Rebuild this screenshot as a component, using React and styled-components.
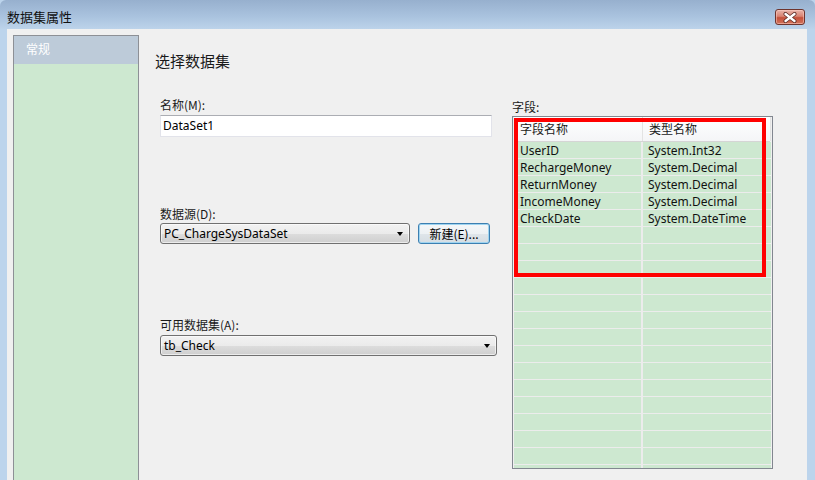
import React from "react";
import styled, { createGlobalStyle } from "styled-components";

const GlobalStyle = createGlobalStyle`
  html, body {
    margin: 0;
    padding: 0;
    background: #bcd4ec;
  }
  body {
    font-family: "Noto Sans", "Noto Sans CJK SC", sans-serif;
    font-size: 12px;
    color: #1e1e1e;
  }
`;

const fields = [
  ["UserID", "System.Int32"],
  ["RechargeMoney", "System.Decimal"],
  ["ReturnMoney", "System.Decimal"],
  ["IncomeMoney", "System.Decimal"],
  ["CheckDate", "System.DateTime"],
];

function App() {
  const rows = [...fields];
  while (rows.length < 20) rows.push(["", ""]);

  return (
    <>
      <GlobalStyle />
      <Window>
        <TitleBar>
          <Title>数据集属性</Title>
          <CloseButton>
            <svg width="14" height="11" viewBox="0 0 14 11">
              <path
                d="M2.5 2 L11.5 9 M11.5 2 L2.5 9"
                stroke="#5a2a24"
                strokeWidth="4"
                strokeLinecap="round"
              />
              <path
                d="M2.5 2 L11.5 9 M11.5 2 L2.5 9"
                stroke="#ffffff"
                strokeWidth="2.4"
                strokeLinecap="round"
              />
            </svg>
          </CloseButton>
        </TitleBar>
        <Body>
          <SidePanel>
            <SideItem>常规</SideItem>
          </SidePanel>
          <Main>
            <Heading>选择数据集</Heading>
            <Columns>
              <FormColumn>
                <Label>名称(M):</Label>
                <TextInput>DataSet1</TextInput>

                <Label $top={69}>数据源(D):</Label>
                <Row>
                  <Select $width={250}>
                    <span>PC_ChargeSysDataSet</span>
                    <Arrow />
                  </Select>
                  <Button>新建(E)...</Button>
                </Row>

                <Label $top={73}>可用数据集(A):</Label>
                <Select $width={337}>
                  <span>tb_Check</span>
                  <Arrow />
                </Select>
              </FormColumn>

              <GridColumn>
                <Label>字段:</Label>
                <GridBox>
                  <GridHeader>
                    <HeaderCell>字段名称</HeaderCell>
                    <HeaderCell>类型名称</HeaderCell>
                  </GridHeader>
                  {rows.map((r, i) => (
                    <GridRow key={i}>
                      <Cell>{r[0]}</Cell>
                      <Cell>{r[1]}</Cell>
                    </GridRow>
                  ))}
                  <Highlight />
                </GridBox>
              </GridColumn>
            </Columns>
          </Main>
        </Body>
      </Window>
    </>
  );
}

const Window = styled.div`
  width: 815px;
  height: 480px;
  display: flex;
  flex-direction: column;
  overflow: hidden;
  background: #bcd4ec;
  border-top-right-radius: 6px;
  border-top-left-radius: 6px;
`;

const TitleBar = styled.div`
  height: 29px;
  flex-shrink: 0;
  display: flex;
  align-items: center;
  justify-content: space-between;
  padding: 0 10px 0 7px;
  background: linear-gradient(to bottom, #97b0ce, #a9c2de 55%, #bcd3ea);
`;

const Title = styled.div`
  font-family: "Noto Sans CJK SC", sans-serif;
  font-size: 13px;
  color: #111;
  margin-top: 3px;
`;

const CloseButton = styled.div`
  width: 30px;
  height: 16px;
  margin-top: 5px;
  box-sizing: border-box;
  border: 1px solid #6e342d;
  border-radius: 3px;
  display: flex;
  align-items: center;
  justify-content: center;
  background: linear-gradient(to bottom, #e9b4aa, #d98372 45%, #c4503a 55%, #d2745c);
  box-shadow: inset 0 0 0 1px rgba(255, 210, 200, 0.5);
`;

const Body = styled.div`
  flex: 1;
  display: flex;
  margin: 0 8px 0 7px;
  padding: 6px 0 0 6px;
  background: #f0f0f0;
  min-height: 0;
`;

const SidePanel = styled.div`
  width: 126px;
  flex-shrink: 0;
  box-sizing: border-box;
  border: 1px solid #8d9096;
  border-bottom: none;
  background: #cde8d0;
`;

const SideItem = styled.div`
  height: 28px;
  line-height: 26px;
  padding-left: 12px;
  background: #bdcbd9;
  color: #ffffff;
  font-family: "Noto Sans CJK SC", sans-serif;
  font-size: 12px;
`;

const Main = styled.div`
  flex: 1;
  padding-left: 16px;
  display: flex;
  flex-direction: column;
  margin-top: -6px;
`;

const Heading = styled.div`
  margin-top: 22px;
  height: 20px;
  line-height: 20px;
  font-family: "Noto Sans CJK SC", sans-serif;
  font-size: 15px;
  color: #1a1a1a;
`;

const Columns = styled.div`
  display: flex;
  gap: 15px;
  margin-top: 26px;
  margin-left: 5px;
`;

const FormColumn = styled.div`
  width: 337px;
  display: flex;
  flex-direction: column;
`;

const Label = styled.div`
  height: 16px;
  line-height: 16px;
  margin-top: ${(p) => p.$top || 0}px;
  margin-bottom: 2px;
  font-family: "Noto Sans CJK SC", sans-serif;
  font-size: 12px;
  color: #1a1a1a;
`;

const TextInput = styled.div`
  width: 332px;
  height: 22px;
  box-sizing: border-box;
  border: 1px solid #e2e3ea;
  border-top-color: #abadb3;
  background: #fff;
  padding-left: 2px;
  line-height: 19px;
  color: #000;
`;

const Row = styled.div`
  display: flex;
  align-items: flex-start;
  gap: 8px;
  margin-top: -1px;
`;

const Select = styled.div`
  width: ${(p) => p.$width}px;
  height: 21px;
  box-sizing: border-box;
  border: 1px solid #707070;
  border-radius: 3px;
  background: linear-gradient(to bottom, #f2f2f2 0%, #ebebeb 50%, #dddddd 51%, #cfcfcf 100%);
  display: flex;
  align-items: center;
  justify-content: space-between;
  padding: 0 6px 0 3px;
  color: #000;
  box-shadow: inset 0 0 0 1px rgba(255, 255, 255, 0.6);
`;

const Arrow = styled.span`
  width: 0;
  height: 0;
  border-left: 3.5px solid transparent;
  border-right: 3.5px solid transparent;
  border-top: 4px solid #000;
  margin-top: 1px;
`;

const Button = styled.div`
  width: 72px;
  height: 21px;
  box-sizing: border-box;
  border: 1px solid #3c7fb1;
  border-radius: 3px;
  background: linear-gradient(to bottom, #f4f7f9 0%, #edf1f4 50%, #dfe5ea 51%, #d5dde3 100%);
  box-shadow: inset 0 0 0 1px #9fd4f0;
  text-align: center;
  line-height: 19px;
  font-family: "Noto Sans CJK SC", sans-serif;
  color: #000;
`;

const GridColumn = styled.div`
  width: 261px;
  display: flex;
  flex-direction: column;
  padding-top: 2px;
`;

const GridBox = styled.div`
  position: relative;
  height: 353px;
  box-sizing: border-box;
  border: 1px solid #828790;
  background: #f0f0f0;
  padding: 0 2px 0 1px;
  overflow: hidden;
  margin-top: -1px;
`;

const GridHeader = styled.div`
  display: grid;
  grid-template-columns: 129px 128px;
  height: 24px;
  border-bottom: 1px solid #d5d5d5;
  background: linear-gradient(to bottom, #ffffff, #f4f5f7);
`;

const HeaderCell = styled.div`
  line-height: 23px;
  padding-left: 6px;
  border-right: 1px solid #e3e3e3;
  font-family: "Noto Sans CJK SC", sans-serif;
  font-size: 12px;
  color: #1a1a1a;
`;

const GridRow = styled.div`
  display: grid;
  grid-template-columns: 129px 128px;
  height: 17px;
  box-sizing: border-box;
  border-bottom: 1px solid #ececec;
`;

const Cell = styled.div`
  background: #cde8d0;
  border-right: 2px solid #ececec;
  padding: 1px 0 0 6px;
  line-height: 16px;
  color: #111;
  white-space: nowrap;
  overflow: hidden;

  &:last-child {
    border-right: none;
    padding-left: 5px;
  }
`;

const Highlight = styled.div`
  position: absolute;
  left: 1px;
  top: 1px;
  width: 252px;
  height: 159px;
  box-sizing: border-box;
  border: 4px solid #ff0000;
  pointer-events: none;
`;

export default App;
